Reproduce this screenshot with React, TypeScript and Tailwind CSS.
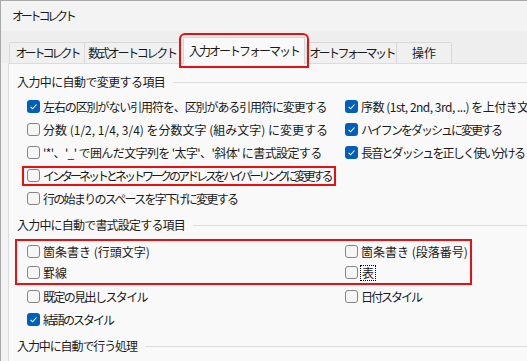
import type { ReactNode } from 'react';

// Word "オートコレクト" dialog, 入力オートフォーマット tab.
// The installed CJK font has full-width kana, so each label gets its own
// tracking to come close to the narrower kana of the Windows UI font.

type Item = { label: string; checked?: boolean; mark?: boolean; focus?: boolean; track?: string };

const replaceLeft: Item[] = [
  { label: '左右の区別がない引用符を、区別がある引用符に変更する', checked: true, track: 'tracking-[-1.1px]' },
  { label: '分数 (1/2, 1/4, 3/4) を分数文字 (組み文字) に変更する' },
  { label: "'*'、'_' で囲んだ文字列を '太字'、'斜体' に書式設定する", track: 'tracking-[-0.6px]' },
  { label: 'インターネットとネットワークのアドレスをハイパーリンクに変更する', mark: true, track: 'tracking-[-3px]' },
  { label: '行の始まりのスペースを字下げに変更する', track: 'tracking-[-1.7px]' },
];

const replaceRight: Item[] = [
  { label: '序数 (1st, 2nd, 3rd, ...) を上付き文字に変更する', checked: true, track: 'tracking-[-0.5px]' },
  { label: 'ハイフンをダッシュに変更する', checked: true, track: 'tracking-[-2px]' },
  { label: '長音とダッシュを正しく使い分ける', checked: true, track: 'tracking-[-1.8px]' },
];

export default function App() {
  return (
    <div className="w-[527px] h-[361px] overflow-hidden flex flex-col bg-[#f3f3f3] border-t border-l border-[#a8a8a8] text-[12px] text-[#1a1a1a] whitespace-nowrap font-['Noto_Sans_CJK_JP',sans-serif]">
      <div className="h-[30px] shrink-0 flex items-center pl-[11px] tracking-[-3.2px]">オートコレクト</div>

      <div className="h-[32px] shrink-0 flex items-end pl-[8px] bg-[#eeeeee]">
        <Tab className="w-[76px] tracking-[-3px]">オートコレクト</Tab>
        <Tab className="w-[96px] -ml-px tracking-[-2.3px]">数式オートコレクト</Tab>
        <div className="relative z-10 ml-[3px] mb-[-1px] w-[122px] h-[27px] flex items-center justify-center pb-[1px] bg-[#f9f9f9] border border-b-0 border-[#d6d6d6] rounded-t-[2px] outline-2 outline-offset-2 outline-[#e81010] tracking-[-2px]">
          入力オートフォーマット
        </div>
        <Tab className="w-[91px] ml-px tracking-[-2.6px]">オートフォーマット</Tab>
        <Tab className="w-[56px] -ml-px">操作</Tab>
      </div>

      <div className="flex-1 ml-[7px] bg-[#f9f9f9] border-l border-t border-[#dcdcdc] pt-[6px]">
        <Heading track="tracking-[-0.6px]">入力中に自動で変更する項目</Heading>

        <div className="mt-[1px] pl-[15px] grid grid-cols-[318px_1fr]">
          <div className="flex flex-col">
            {replaceLeft.map((it) => (
              <Row key={it.label} item={it} />
            ))}
          </div>
          <div className="flex flex-col">
            {replaceRight.map((it) => (
              <Row key={it.label} item={it} />
            ))}
          </div>
        </div>

        <Heading className="mt-[3px]" track="tracking-[-0.8px]">入力中に自動で書式設定する項目</Heading>

        <div className="mt-[2px] ml-[6px] w-[457px] border-2 border-[#e81010] pl-[7px] grid grid-cols-[318px_1fr]">
          <Row item={{ label: '箇条書き (行頭文字)' }} h="h-[21px]" />
          <Row item={{ label: '箇条書き (段落番号)' }} h="h-[21px]" />
          <Row item={{ label: '罫線' }} h="h-[21px]" />
          <Row item={{ label: '表', focus: true }} h="h-[21px]" />
        </div>

        <div className="pl-[15px] grid grid-cols-[318px_1fr]">
          <Row item={{ label: '既定の見出しスタイル', track: 'tracking-[-1.6px]' }} />
          <Row item={{ label: '日付スタイル', track: 'tracking-[-2px]' }} />
          <Row item={{ label: '結語のスタイル', checked: true, track: 'tracking-[-2px]' }} />
        </div>

        <Heading className="mt-[3px]" track="tracking-[-1.1px]">入力中に自動で行う処理</Heading>
      </div>
    </div>
  );
}

function Tab({ className, children }: { className: string; children: ReactNode }) {
  return (
    <div className={`${className} h-[21px] flex items-center justify-center bg-[#f0f0f0] border border-b-0 border-[#d9d9d9] rounded-t-[2px]`}>
      {children}
    </div>
  );
}

function Heading({ children, className = '', track = '' }: { children: ReactNode; className?: string; track?: string }) {
  return (
    <div className={`h-[24px] flex items-center pl-[8px] ${className}`}>
      <span className={track}>{children}</span>
      <span className="flex-1 ml-[8px] h-px bg-[#dcdcdc]" />
    </div>
  );
}

function Row({ item, h = 'h-[23px]' }: { item: Item; h?: string }) {
  return (
    <div className={`${h} flex items-center`}>
      <div
        className={`h-[16px] flex items-center gap-[3px] px-[3px] ${
          item.mark ? 'outline-2 outline-[#e81010]' : ''
        }`}
      >
        <Check on={!!item.checked} />
        {item.focus ? (
          <span className="px-[1px] leading-[14px] outline outline-1 outline-dotted outline-black">{item.label}</span>
        ) : (
          <span className={item.track ?? ''}>{item.label}</span>
        )}
      </div>
    </div>
  );
}

function Check({ on }: { on: boolean }) {
  if (on) {
    return (
      <span className="w-[13px] h-[13px] shrink-0 rounded-[3px] bg-[#005fb8] flex items-center justify-center">
        <svg width="9" height="9" viewBox="0 0 9 9">
          <path d="M1.6 4.9 L3.6 6.8 L7.5 2.5" stroke="#fff" strokeWidth="1.1" fill="none" />
        </svg>
      </span>
    );
  }
  return <span className="w-[13px] h-[13px] shrink-0 rounded-[3px] border border-[#858585] bg-[#f6f6f6]" />;
}
